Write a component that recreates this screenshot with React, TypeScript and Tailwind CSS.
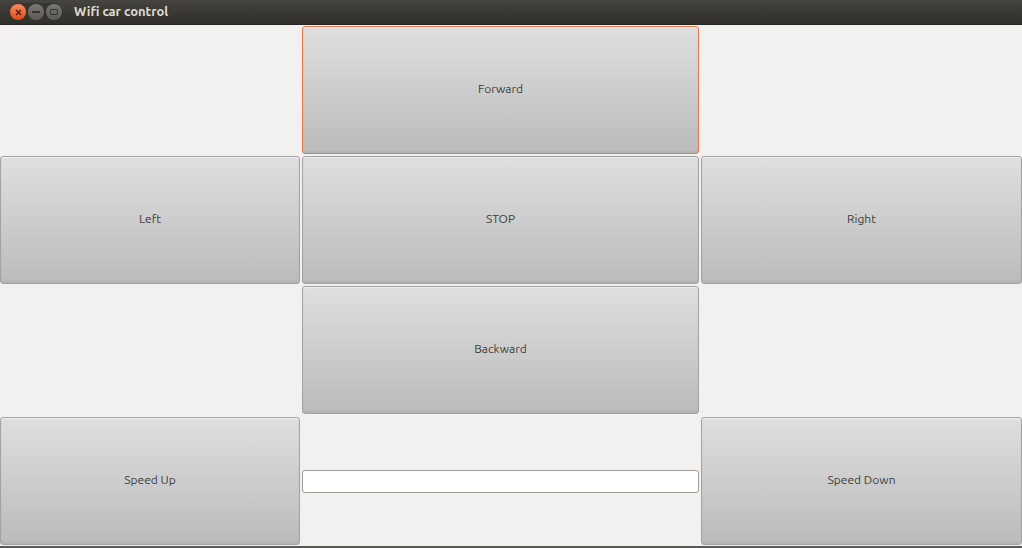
import React from "react";

const font = { fontFamily: "Ubuntu, 'Open Sans', 'DejaVu Sans', sans-serif" };

type BtnProps = { label: string; focused?: boolean };

const GtkButton = ({ label, focused }: BtnProps) => (
  <button
    className={
      focused
        ? "w-full h-[128px] self-start pb-[2px] rounded-[3px] border border-[#e9764a] bg-gradient-to-b from-[#dfdfdf] to-[#bbbbbb] text-[12px] text-[#3c3c3c] shadow-[inset_0_1px_0_rgba(255,255,255,0.5),inset_0_-2px_2px_rgba(0,0,0,0.05)]"
        : "w-full h-[128px] self-start pb-[2px] rounded-[3px] border border-[#a3a3a3] bg-gradient-to-b from-[#dfdfdf] to-[#bbbbbb] text-[12px] text-[#3c3c3c] shadow-[inset_0_1px_0_rgba(255,255,255,0.5),inset_0_-2px_2px_rgba(0,0,0,0.05)]"
    }
  >
    {label}
  </button>
);

const TitleBar = () => (
  <div className="h-[25px] flex items-center bg-gradient-to-b from-[#45443f] to-[#2f2e2a] border-b border-[#262522]">
    <div className="ml-[9px] flex items-center gap-[2px] rounded-full bg-[#35342f] p-[1px]">
      <div className="w-[16px] h-[16px] rounded-full bg-gradient-to-b from-[#f58a5b] to-[#df4b14] flex items-center justify-center">
        <svg width="7" height="7" viewBox="0 0 7 7">
          <path d="M1 1L6 6M6 1L1 6" stroke="#4a1a08" strokeWidth="1.3" />
        </svg>
      </div>
      <div className="w-[16px] h-[16px] rounded-full bg-gradient-to-b from-[#7a7973] to-[#5b5a55] flex items-center justify-center">
        <div className="w-[8px] h-[2px] bg-[#35342f]" />
      </div>
      <div className="w-[16px] h-[16px] rounded-full bg-gradient-to-b from-[#7a7973] to-[#5b5a55] flex items-center justify-center">
        <div className="w-[8px] h-[6px] border-[1.5px] border-[#35342f] rounded-[1px]" />
      </div>
    </div>
    <span className="ml-[11px] text-[13px] font-bold text-[#dfdbd2]">Wifi car control</span>
  </div>
);

export default function App() {
  return (
    <div style={font} className="w-[1022px] h-[548px] bg-[#f2f1f0] flex flex-col overflow-hidden">
      <TitleBar />
      <div className="grid grid-cols-[300px_397px_321px] grid-rows-[128px_128px_129px_129px] gap-x-[2px] gap-y-[2px] pt-px">
        <div />
        <GtkButton label="Forward" focused />
        <div />

        <GtkButton label="Left" />
        <GtkButton label="STOP" />
        <GtkButton label="Right" />

        <div />
        <GtkButton label="Backward" />
        <div />

        <GtkButton label="Speed Up" />
        <div className="flex items-center">
          <input
            type="text"
            className="w-full h-[23px] rounded-[3px] border border-[#a09e99] bg-white outline-none px-2 text-[12px]"
          />
        </div>
        <GtkButton label="Speed Down" />
      </div>
      <div className="mt-auto h-[2px] bg-[#5a5955]" />
    </div>
  );
}
